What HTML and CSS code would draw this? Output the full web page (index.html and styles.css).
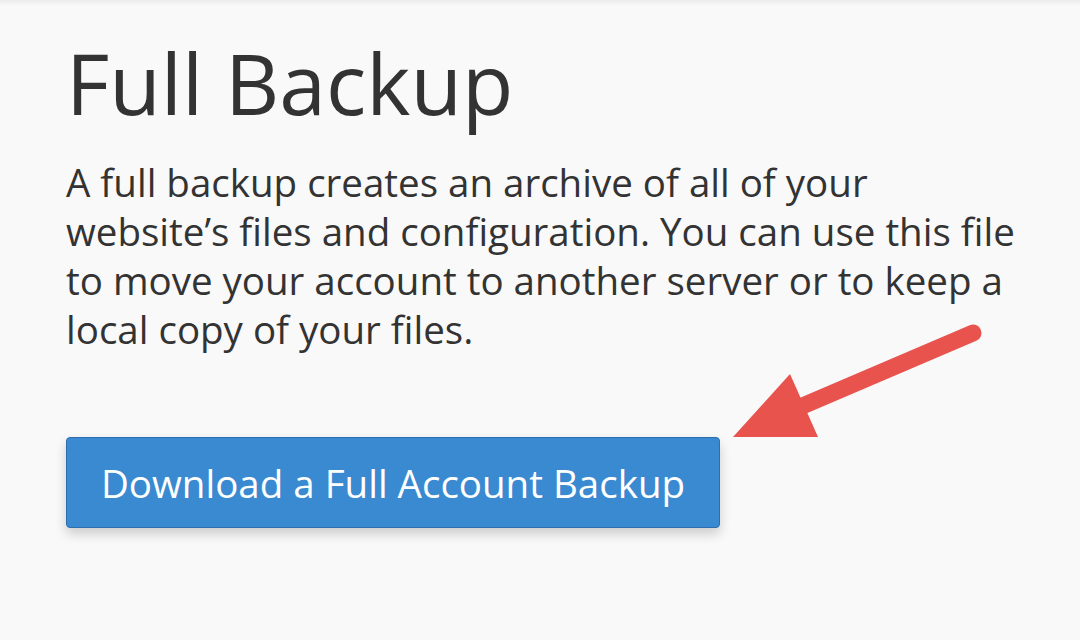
FILE: index.html
```html
<!DOCTYPE html>
<html lang="en">
<head>
    <meta charset="UTF-8">
    <meta name="viewport" content="width=device-width, initial-scale=1.0">
    <title>Full Backup</title>
    <link rel="stylesheet" href="styles.css">
</head>
<body>
    <div class="topbar"></div>
    <div class="container">
        <h1>Full Backup</h1>
        <p class="intro">A full backup creates an archive of all of your website’s files and configuration. You can use this file to move your account to another server or to keep a local copy of your files.</p>
        <div class="button-container">
            <button type="button">Download a Full Account Backup</button>
        </div>
    </div>
    <svg class="pointer" width="1080" height="640" viewBox="0 0 1080 640">
        <line x1="973" y1="333" x2="800" y2="407" stroke="#e8534d" stroke-width="17" stroke-linecap="round"/>
        <polygon points="733,437 790,374 818,437" fill="#e8534d"/>
    </svg>
</body>
</html>
```

FILE: styles.css
```css
body {
    font-family: "Open Sans", "Liberation Sans", sans-serif;
    background-color: #f9f9f9;
    color: #333;
    margin: 0;
    padding: 0;
    height: 640px;
    overflow: hidden;
    position: relative;
}
.topbar {
    height: 6px;
    background: linear-gradient(#ececec, #f9f9f9);
}
.container {
    padding: 0 40px 0 66px;
}
h1 {
    margin: 22px 0 0;
    font-size: 84px;
    font-weight: 400;
    line-height: 110px;
}
.intro {
    margin: 20px 0 0;
    font-size: 38.5px;
    line-height: 49px;
    max-width: 962px;
}
.button-container {
    margin-top: 83px;
}
button {
    font-family: inherit;
    background-color: #3a8ad1;
    color: #fff;
    width: 654px;
    height: 91px;
    padding: 0;
    border: 1px solid #2d6fae;
    border-radius: 4px;
    font-size: 38.5px;
    box-shadow: 0 6px 12px rgba(0, 0, 0, 0.18);
    cursor: pointer;
}
.pointer {
    position: absolute;
    top: 0;
    left: 0;
}
```
